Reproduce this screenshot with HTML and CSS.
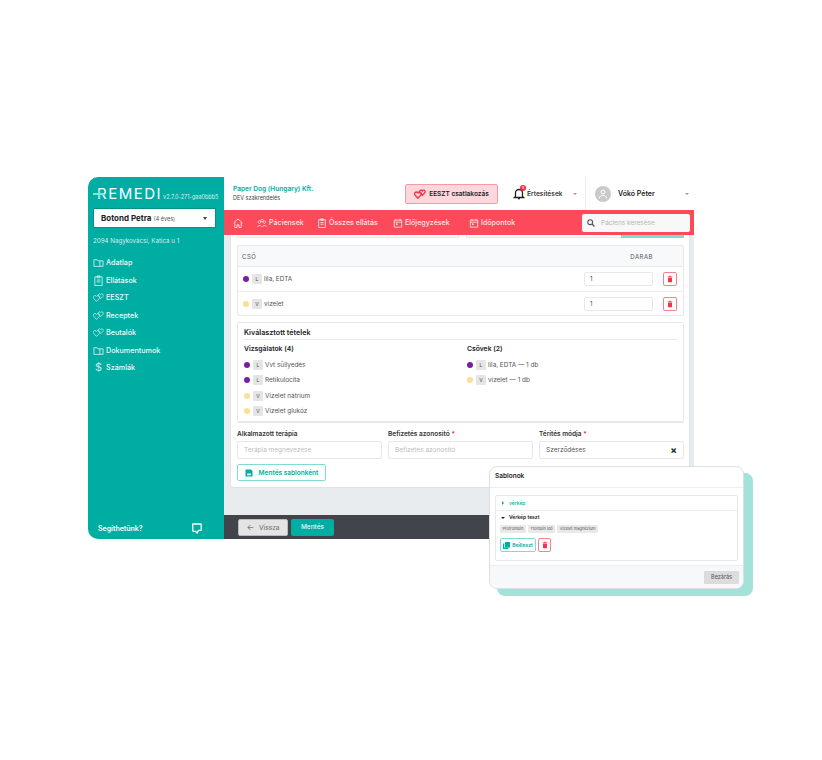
FILE: index.html
```html
<!DOCTYPE html>
<html lang="hu">
<head>
<meta charset="UTF-8" />
<title>Remedi</title>
<link rel="stylesheet" href="styles.css">
</head>
<body>
<svg class="defs" width="0" height="0">
  <symbol id="i-folder" viewBox="0 0 12 12"><path d="M1 3h3.500l1 1.200H11v6H1zM7.500 4.200v6" fill="none" stroke="currentColor"/></symbol>
  <symbol id="i-clip" viewBox="0 0 12 12"><path d="M2 2h8v9.500H2zM4.500 1h3v2h-3zM4 5.500h4M4 7.500h4" fill="none" stroke="currentColor"/></symbol>
  <symbol id="i-hearts" viewBox="0 0 14 12"><path d="M4.500 11 1 7.300C-.2 5.800.6 3.500 2.600 3.500c.8 0 1.500.4 1.900 1.100.4-.7 1.100-1.100 1.900-1.100 2 0 2.800 2.300 1.600 3.800zM9.800 7.500 7 4.600C6 3.400 6.700 1.300 8.400 1.300c.6 0 1.100.3 1.400.9.3-.6.800-.9 1.400-.9 1.700 0 2.400 2.100 1.400 3.300z" fill="none" stroke="currentColor"/></symbol>
  <symbol id="i-cal" viewBox="0 0 12 12"><path d="M1.500 2.500h9v8.500h-9zM1.500 5h9M3.500 1v2.500M8.500 1v2.500" fill="none" stroke="currentColor"/><rect x="3.500" y="6.500" width="2" height="2" fill="currentColor"/></symbol>
  <symbol id="i-trash" viewBox="0 0 10 10"><path d="M2.500 3h5v6h-5zM2 1.800h6V2.600H2zM4 1h2v1H4z" fill="currentColor"/></symbol>
</svg>

<div class="app">
  <aside class="sidebar">
    <div class="brand">
      <span class="logo"><i class="logo-plus"></i>REMEDI</span>
      <span class="version">v2.7.0-271-gaa0bbb5</span>
    </div>
    <div class="patient-select">
      <span><b>Botond Petra</b> <small>(4 éves)</small></span>
      <i class="caret"></i>
    </div>
    <div class="address">2094 Nagykovácsi, Katica u 1</div>
    <nav class="side-menu">
      <a><svg class="side-icon"><use href="#i-folder"/></svg>Adatlap</a>
      <a><svg class="side-icon"><use href="#i-clip"/></svg>Ellátások</a>
      <a><svg class="side-icon"><use href="#i-hearts"/></svg>EESZT</a>
      <a><svg class="side-icon"><use href="#i-hearts"/></svg>Receptek</a>
      <a><svg class="side-icon"><use href="#i-hearts"/></svg>Beutalók</a>
      <a><svg class="side-icon"><use href="#i-folder"/></svg>Dokumentumok</a>
      <a><span class="side-icon dollar">$</span>Számlák</a>
    </nav>
    <div class="help">
      <span>Segíthetünk?</span>
      <svg width="10" height="11" viewBox="0 0 10 11"><path d="M1.500 1h7a.7.7 0 0 1 .7.700v5a.7.7 0 0 1-.7.700H6.500L5 10 3.500 8.400h-2a.7.7 0 0 1-.7-.700v-5A.7.7 0 0 1 1.500 1z" fill="none" stroke="#fff" stroke-width="1.300"/></svg>
    </div>
  </aside>

  <div class="main">
    <header class="topbar">
      <div class="org">
        <div class="org-name">Paper Dog (Hungary) Kft.</div>
        <div class="org-unit">DEV szakrendelés</div>
      </div>
      <button class="eeszt-btn"><svg class="eeszt-icon"><use href="#i-hearts"/></svg>EESZT csatlakozás</button>
      <div class="notif">
        <span class="bell">
          <svg width="12" height="13" viewBox="0 0 12 13"><path d="M2.500 9.500V6a3.500 3.500 0 0 1 7 0v3.500l1 1H1.500zM5 11.500h2" fill="none" stroke="#222" stroke-width="1.300"/></svg>
          <i class="bell-badge">3</i>
        </span>
        <span>Értesítések</span>
        <i class="caret small"></i>
      </div>
      <div class="user">
        <span class="avatar"><svg width="10" height="10" viewBox="0 0 10 10"><circle cx="5" cy="3" r="2" fill="none" stroke="#fff"/><path d="M1.200 9.500c.4-2.500 2-3 3.800-3s3.400.5 3.800 3" fill="none" stroke="#fff"/></svg></span>
        <b>Vókó Péter</b>
        <i class="caret small"></i>
      </div>
    </header>

    <nav class="navbar">
      <a class="home"><svg width="10" height="10" viewBox="0 0 10 10"><path d="M.5 5 5 1l4.500 4M1.800 4.500v5h2.200V6.800h2v2.700h2.200v-5" fill="none" stroke="currentColor" stroke-width=".9"/></svg></a>
      <a class="nav-patients"><svg class="nav-icon" viewBox="0 0 12 12"><path d="M3 6.500a1.500 1.500 0 1 1 .01 0M9 6.500a1.500 1.500 0 1 1 .01 0M6 4.500a1.500 1.500 0 1 1 .01 0M.8 10.500c.2-2 4-2 4.400 0M6.800 10.500c.2-2 4-2 4.400 0" fill="none" stroke="currentColor"/></svg>Páciensek</a>
      <a class="nav-care"><svg class="nav-icon"><use href="#i-clip"/></svg>Összes ellátás</a>
      <a class="nav-booked"><svg class="nav-icon"><use href="#i-cal"/></svg>Előjegyzések</a>
      <a class="nav-times"><svg class="nav-icon"><use href="#i-cal"/></svg>Időpontok</a>
      <label class="search">
        <svg width="8" height="8" viewBox="0 0 8 8"><circle cx="3.200" cy="3.200" r="2.400" fill="none" stroke="#555" stroke-width="1.100"/><path d="M5 5l2.500 2.500" stroke="#555" stroke-width="1.200"/></svg>
        <span>Páciens keresése</span>
      </label>
    </nav>

    <main class="content">
      <div class="card">
        <div class="cut-row">
          <i class="cut-a"></i><i class="cut-b"></i><i class="cut-btn"></i>
        </div>

        <div class="tube-table">
          <div class="tube-head"><span>CSŐ</span><span class="qty-head">DARAB</span></div>
          <div class="tube-row">
            <i class="dot purple"></i><i class="tag">L</i><span>lila, EDTA</span>
            <span class="qty">1</span>
            <button class="trash"><svg width="8" height="8"><use href="#i-trash"/></svg></button>
          </div>
          <div class="tube-row">
            <i class="dot yellow"></i><i class="tag">V</i><span>vizelet</span>
            <span class="qty">1</span>
            <button class="trash"><svg width="8" height="8"><use href="#i-trash"/></svg></button>
          </div>
        </div>

        <section class="selected">
          <h3>Kiválasztott tételek</h3>
          <div class="selected-cols">
            <div class="selected-col">
              <h4>Vizsgálatok (4)</h4>
              <div class="item"><i class="dot purple"></i><i class="tag">L</i><span>Vvt süllyedés</span></div>
              <div class="item"><i class="dot purple"></i><i class="tag">L</i><span>Retikulocita</span></div>
              <div class="item"><i class="dot yellow"></i><i class="tag">V</i><span>Vizelet nátrium</span></div>
              <div class="item"><i class="dot yellow"></i><i class="tag">V</i><span>Vizelet glukóz</span></div>
            </div>
            <div class="selected-col">
              <h4>Csövek (2)</h4>
              <div class="item"><i class="dot purple"></i><i class="tag">L</i><span>lila, EDTA — 1 db</span></div>
              <div class="item"><i class="dot yellow"></i><i class="tag">V</i><span>vizelet — 1 db</span></div>
            </div>
          </div>
        </section>

        <div class="form-row">
          <div class="field">
            <label>Alkalmazott terápia</label>
            <div class="input placeholder">Terápia megnevezése</div>
          </div>
          <div class="field">
            <label>Befizetés azonosító <em>*</em></label>
            <div class="input placeholder">Befizetés azonosító</div>
          </div>
          <div class="field">
            <label>Térítés módja <em>*</em></label>
            <div class="input value"><span>Szerződéses</span><b>×</b></div>
          </div>
        </div>

        <button class="save-template">
          <svg width="8" height="8" viewBox="0 0 8 8"><path d="M.5.5h5.500L7.500 2v5.500h-7z" fill="currentColor"/><rect x="2.200" y="4.500" width="3.600" height="1.800" fill="#fff"/></svg>
          Mentés sablonként
        </button>
      </div>
    </main>

    <footer class="actions">
      <button class="back"><span>←</span> Vissza</button>
      <button class="save">Mentés</button>
    </footer>
  </div>
</div>

<div class="modal-wrap">
  <div class="modal-shadow"></div>
  <div class="modal">
    <div class="modal-head">Sablonok</div>
    <div class="modal-body">
      <div class="tpl-box">
        <div class="tpl-row"><i class="tri-right"></i><span>vérkép</span></div>
        <div class="tpl-open">
          <div class="tpl-title"><i class="tri-down"></i><b>Vérkép teszt</b></div>
          <div class="chips"><span>Protrombin</span><span>Trombin idő</span><span>Vizelet magnézium</span></div>
          <div class="tpl-actions">
            <button class="paste">
              <svg width="7" height="7" viewBox="0 0 7 7"><path d="M2 0h5v5.500H2zM0 1.500h1.300v4.200h4v1.300H0z" fill="currentColor"/></svg>
              Beilleszt
            </button>
            <button class="trash big"><svg width="8" height="8"><use href="#i-trash"/></svg></button>
          </div>
        </div>
      </div>
    </div>
    <div class="modal-foot"><button class="close">Bezárás</button></div>
  </div>
</div>
</body>
</html>
```

FILE: styles.css
```css
* { box-sizing: border-box; }
html, body { height: 100%; }
body {
  margin: 0;
  background: #fff;
  font-family: Inter, "Liberation Sans", sans-serif;
  font-size: 7px;
  color: #333;
  padding: 177px 0 0 88px;
  position: relative;
  overflow: hidden;
}
button { font-family: inherit; cursor: pointer; }
i { font-style: normal; }
.defs { position: absolute; }

.app {
  display: flex;
  width: 606px;
  height: 362px;
}

/* sidebar */
.sidebar {
  width: 136px;
  flex: none;
  background: #00ada3;
  border-radius: 10px 0 0 10px;
  color: #fff;
  padding: 9px 8px 0 5px;
  display: flex;
  flex-direction: column;
}
.brand { display: flex; height: 22px; white-space: nowrap; }
.logo {
  position: relative;
  font-size: 15px;
  letter-spacing: 1.500px;
  line-height: 16px;
  padding-left: 4px;
  font-weight: 400;
  height: 16px;
}
.logo-plus {
  position: absolute;
  left: 0;
  top: 7px;
  width: 11px;
  height: 2px;
  background: #7ee6d8;
}
.logo-plus::after {
  content: "";
  position: absolute;
  left: 5px;
  top: -3px;
  width: 2px;
  height: 8px;
  background: #7ee6d8;
}
.version { font-size: 5.500px; color: #d4f2ee; margin: 8px 0 0 1px; }
.patient-select {
  height: 20px;
  background: #fff;
  color: #222;
  display: flex;
  align-items: center;
  justify-content: space-between;
  padding: 0 8px 0 7px;
  font-size: 8px;
  width: 123px;
  border: 1px solid #0a8f87;
}
.patient-select small { font-size: 5.500px; color: #555; }
.caret {
  width: 0;
  height: 0;
  border: 2.500px solid transparent;
  border-top: 3px solid #444;
  border-bottom: 0;
}
.caret.small { border-width: 2px 2px 0; border-top-color: #999; }
.address { margin-top: 8px; font-size: 6.200px; color: #d5f1ee; line-height: 9px; height: 9px; }
.side-menu { margin-top: 9px; display: flex; flex-direction: column; }
.side-menu a {
  display: flex;
  align-items: center;
  gap: 2px;
  height: 17.500px;
  font-size: 7.200px;
  font-weight: 500;
  color: #f0fbfa;
}
.side-icon { width: 11px; height: 11px; flex: none; color: #c4ede9; }
.dollar { font-size: 11px; line-height: 11px; text-align: center; font-weight: 400; }
.help {
  margin-top: auto;
  display: flex;
  justify-content: space-between;
  align-items: center;
  height: 20px;
  padding: 0 14px 0 5px;
  font-size: 7px;
  font-weight: 600;
  margin-bottom: 1px;
}

/* main column */
.main { flex: 1; display: flex; flex-direction: column; min-width: 0; }
.topbar {
  height: 33px;
  flex: none;
  background: #fff;
  display: flex;
  align-items: center;
  padding-left: 9px;
}
.org { width: 172px; }
.org-name { color: #00ada3; font-size: 6.600px; font-weight: 600; line-height: 10px; }
.org-unit { color: #444; font-size: 5.500px; line-height: 9px; }
.eeszt-btn {
  width: 93px;
  height: 20px;
  background: #fcd8dc;
  border: 1px solid #f79aa4;
  border-radius: 2px;
  color: #222;
  font-size: 6.500px;
  font-weight: 600;
  display: flex;
  align-items: center;
  justify-content: center;
  gap: 3px;
  padding: 0;
}
.eeszt-icon { width: 12px; height: 10px; color: #f0374a; stroke-width: 1.700; }
.notif {
  margin-left: 15px;
  display: flex;
  align-items: center;
  gap: 2px;
  width: 73px;
  font-size: 6.700px;
  font-weight: 500;
  color: #222;
  height: 33px;
  border-right: 1px solid #eee;
}
.notif .caret { margin-left: 8px; }
.bell { position: relative; display: block; width: 12px; height: 13px; }
.bell-badge {
  position: absolute;
  top: -2px;
  right: -1px;
  width: 6px;
  height: 6px;
  border-radius: 50%;
  background: #f5293d;
  color: #fff;
  font-size: 4px;
  line-height: 6px;
  text-align: center;
}
.user {
  flex: 1;
  display: flex;
  align-items: center;
  padding-left: 9px;
  padding-right: 5px;
  font-size: 7px;
  color: #222;
}
.avatar {
  width: 16px;
  height: 16px;
  border-radius: 50%;
  background: #c9c9c9;
  display: flex;
  align-items: center;
  justify-content: center;
  margin-right: 7px;
}
.user b { font-weight: 600; }
.user .caret { margin-left: auto; }

.navbar {
  height: 25px;
  flex: none;
  background: #fc4a5a;
  display: flex;
  align-items: center;
  padding-left: 9px;
  color: #fde3e5;
  font-size: 7.100px;
  font-weight: 500;
}
.navbar a { display: flex; align-items: center; gap: 2px; white-space: nowrap; }
.home { margin-right: 14px; }
.nav-icon { width: 10px; height: 10px; flex: none; }
.nav-patients { width: 47px; margin-right: 13px; }
.nav-care { width: 61px; margin-right: 15px; }
.nav-booked { width: 57px; margin-right: 19px; }
.nav-times { width: 47px; }
.search {
  margin-left: 66px;
  width: 108px;
  height: 18px;
  background: #f8f8f8;
  border-radius: 2px;
  display: flex;
  align-items: center;
  padding-left: 5px;
  gap: 6px;
  color: #b5b5b5;
  font-size: 6.500px;
  font-weight: 400;
}

.content {
  flex: 1;
  background: #e9ecef;
  padding: 0 4px 0 6px;
  overflow: hidden;
}
.card {
  background: #fff;
  height: 253px;
  border-radius: 0 0 3px 3px;
  border: 1px solid #dfe3e6;
  border-top: 0;
  padding: 0 5px 0 6px;
}
.cut-row { display: flex; height: 10px; position: relative; }
.cut-a { width: 222px; height: 3px; border: 1px solid #e6e8ea; border-top: 0; border-radius: 0 0 2px 2px; }
.cut-b {
  width: 155px;
  height: 3px;
  margin-left: 7px;
  border-bottom: 1px solid #e6e8ea;
  border-left: 1px solid #e6e8ea;
}
.cut-btn { width: 63px; height: 3px; background: #7ddcd4; }

.tube-table { border: 1px solid #e6e8ea; border-radius: 2px; }
.tube-head {
  height: 21px;
  background: #f8f9fa;
  display: flex;
  justify-content: space-between;
  align-items: center;
  padding: 0 30px 0 4px;
  font-size: 6px;
  color: #555;
  letter-spacing: .5px;
  border-bottom: 1px solid #e6e8ea;
}
.tube-row {
  height: 24px;
  display: flex;
  align-items: center;
  padding-left: 5px;
  padding-right: 6px;
  font-size: 6.400px;
  color: #555;
}
.tube-row + .tube-row { border-top: 1px solid #eceef0; }
.dot { width: 6px; height: 6px; border-radius: 50%; flex: none; margin-right: 3px; }
.dot.purple { background: #7b1fa2; }
.dot.yellow { background: #fbdf94; }
.tag {
  width: 10px;
  height: 10px;
  background: #e5e5e5;
  border-radius: 1px;
  font-size: 5px;
  line-height: 10px;
  text-align: center;
  margin-right: 2px;
  flex: none;
  color: #444;
}
.qty {
  margin-left: auto;
  width: 69px;
  height: 14px;
  border: 1px solid #e6e8ea;
  border-radius: 2px;
  padding-left: 5px;
  font-size: 6px;
  line-height: 12px;
  color: #444;
}
.trash {
  width: 14px;
  height: 14px;
  margin-left: 10px;
  border: 1px solid #f5818d;
  border-radius: 2px;
  background: #fff;
  color: #f0374a;
  padding: 0;
  display: flex;
  align-items: center;
  justify-content: center;
}

.selected {
  margin-top: 6px;
  height: 101px;
  border: 1px solid #e6e8ea;
  border-bottom-width: 2px;
  border-radius: 2px;
  padding: 5px 6px 0;
}
.selected h3 {
  margin: 0;
  font-size: 7.200px;
  font-weight: 600;
  line-height: 10px;
  height: 12px;
  color: #222;
  border-bottom: 1px solid #e6e8ea;
}
.selected-cols { display: flex; }
.selected-col { width: 223px; flex: none; }
.selected-col h4 { margin: 4px 0 3px; font-size: 6.800px; font-weight: 600; line-height: 10px; color: #222; }
.item { display: flex; align-items: center; height: 15.500px; font-size: 6.400px; color: #555; }

.form-row { display: flex; gap: 6px; margin-top: 7px; }
.field { flex: 1; }
.field label { display: block; font-size: 6.500px; font-weight: 600; color: #333; line-height: 9px; margin-bottom: 2px; white-space: nowrap; }
.field em { color: #f5293d; font-style: normal; }
.input {
  height: 18px;
  border: 1px solid #e6e8ea;
  border-radius: 2px;
  padding: 0 6px;
  font-size: 6.500px;
  line-height: 16px;
}
.placeholder { color: #bdbdbd; }
.value { display: flex; justify-content: space-between; color: #555; }
.value b { font-size: 10px; color: #222; }
.save-template {
  margin-top: 5px;
  width: 89px;
  height: 17px;
  background: #fff;
  border: 1px solid #7ddcd4;
  border-radius: 2px;
  color: #00ada3;
  font-size: 6.500px;
  font-weight: 600;
  display: flex;
  align-items: center;
  justify-content: center;
  gap: 6px;
  padding: 0;
}

.actions {
  height: 24px;
  flex: none;
  background: #41444b;
  display: flex;
  align-items: center;
  padding-left: 14px;
  gap: 3px;
}
.actions button { height: 17px; border-radius: 2px; font-size: 6.500px; font-weight: 500; padding: 0; }
.back { width: 50px; background: #e4e4e4; border: 1px solid #bbb; color: #777; }
.back span { font-size: 8px; margin-right: 3px; }
.save { width: 43px; background: #00ada3; border: 0; color: #eafaf8; }

/* overlay window */
.modal-wrap { position: absolute; left: 489px; top: 466px; width: 255px; height: 123px; }
.modal-shadow {
  position: absolute;
  left: 8px;
  top: 7px;
  width: 256px;
  height: 123px;
  background: #a3e2d9;
  border-radius: 8px;
}
.modal {
  position: relative;
  height: 123px;
  background: #fff;
  border: 1px solid #dcdfe2;
  border-radius: 8px;
  display: flex;
  flex-direction: column;
  overflow: hidden;
}
.modal-head {
  height: 21px;
  padding-left: 5px;
  border-bottom: 1px solid #eceef0;
  font-size: 6.500px;
  font-weight: 600;
  line-height: 19px;
  color: #222;
}
.modal-body { flex: 1; padding: 7px 5px 0 5px; }
.tpl-box { border: 1px solid #e6e8ea; border-radius: 2px; height: 66px; }
.tpl-row {
  height: 15px;
  display: flex;
  align-items: center;
  padding-left: 6px;
  gap: 5px;
  border-bottom: 1px solid #eceef0;
  color: #00ada3;
  font-size: 5px;
  font-weight: 500;
}
.tri-right { border-left: 2px solid #00ada3; border-top: 2px solid transparent; border-bottom: 2px solid transparent; }
.tri-down { border-top: 2px solid #222; border-left: 2.500px solid transparent; border-right: 2.500px solid transparent; }
.tpl-open { padding: 2px 4px; }
.tpl-title { display: flex; align-items: center; gap: 4px; padding-left: 1px; font-size: 5px; color: #222; line-height: 9px; }
.tpl-title b { font-weight: 600; }
.chips { display: flex; gap: 2px; margin-top: 3px; }
.chips span {
  background: #e9e9e9;
  border-radius: 1px;
  height: 8px;
  line-height: 8px;
  padding: 0 2.500px;
  font-size: 4px;
  color: #555;
}
.tpl-actions { display: flex; gap: 2px; margin-top: 5px; }
.paste {
  width: 36px;
  height: 14px;
  background: #fff;
  border: 1px solid #7ddcd4;
  border-radius: 2px;
  color: #00ada3;
  font-size: 5px;
  font-weight: 600;
  display: flex;
  align-items: center;
  justify-content: center;
  gap: 2px;
  padding: 0;
}
.trash.big { margin-left: 0; width: 13px; height: 14px; }
.modal-foot {
  height: 23px;
  background: #f7f8f9;
  border-top: 1px solid #eceef0;
  display: flex;
  align-items: center;
  justify-content: flex-end;
  padding-right: 4px;
}
.close {
  width: 35px;
  height: 13px;
  background: #dcdcdc;
  border: 0;
  border-radius: 1px;
  font-size: 5.500px;
  color: #555;
  padding: 0;
}
```
